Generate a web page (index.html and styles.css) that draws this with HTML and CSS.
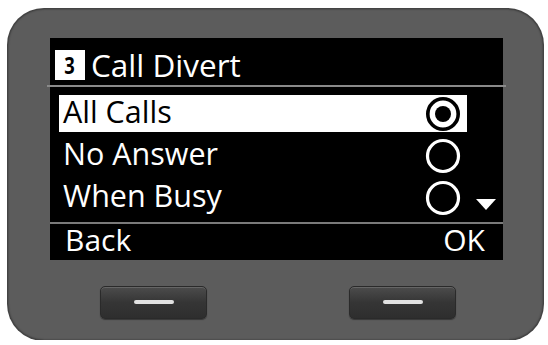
FILE: index.html
```html
<!DOCTYPE html>
<html>
<head>
<meta charset="utf-8">
<link rel="stylesheet" href="styles.css">
</head>
<body>
<div class="phone">
  <div class="screen">
    <div class="title-row">
      <span class="num"><span class="digit">3</span></span>
      <span class="title">Call Divert</span>
    </div>
    <div class="sep"></div>
    <div class="list">
      <div class="row">
        <div class="item selected">
          <span class="label">All Calls</span>
          <svg class="radio" width="36" height="36" viewBox="0 0 36 36"><circle cx="18" cy="18" r="15.2" fill="none" stroke="#000" stroke-width="3.6"/><circle cx="18" cy="18" r="8" fill="#000"/></svg>
        </div>
        <div class="aside"></div>
      </div>
      <div class="row">
        <div class="item">
          <span class="label">No Answer</span>
          <svg class="radio" width="36" height="36" viewBox="0 0 36 36"><circle cx="18" cy="18" r="15.5" fill="none" stroke="#fff" stroke-width="3.2"/></svg>
        </div>
        <div class="aside"></div>
      </div>
      <div class="row">
        <div class="item">
          <span class="label">When Busy</span>
          <svg class="radio" width="36" height="36" viewBox="0 0 36 36"><circle cx="18" cy="18" r="15.5" fill="none" stroke="#fff" stroke-width="3.2"/></svg>
        </div>
        <div class="aside"><span class="down"></span></div>
      </div>
    </div>
    <div class="sep2"></div>
    <div class="softkeys">
      <span class="sk">Back</span>
      <span class="sk">OK</span>
    </div>
  </div>
  <div class="buttons">
    <div class="btn"><span class="bar"></span></div>
    <div class="btn"><span class="bar"></span></div>
  </div>
</div>
</body>
</html>
```

FILE: styles.css
```css
html, body {
  margin: 0;
  padding: 0;
  background: #fff;
}
body {
  font-family: "Open Sans", "Noto Sans", sans-serif;
}
.phone {
  margin: 9px 0 0 8px;
  width: 535px;
  height: 331px;
  box-sizing: border-box;
  padding: 29px 0 0 42px;
  border-radius: 36px;
  background: #5c5c5c;
  box-shadow: 0 0 0 1px #444, inset 0 0 2px rgba(0,0,0,0.5);
}
.screen {
  width: 453px;
  height: 222px;
  background: #000;
  display: flex;
  flex-direction: column;
}
.title-row {
  height: 47px;
  box-sizing: border-box;
  padding: 12px 0 0 5px;
  display: flex;
  align-items: flex-start;
  gap: 6px;
}
.num {
  width: 30px;
  height: 30px;
  background: #fff;
  color: #000;
  display: flex;
  align-items: center;
  justify-content: center;
}
.digit {
  display: inline-block;
  font-weight: 700;
  font-size: 23px;
  line-height: 30px;
  transform: scaleX(0.8);
}
.title {
  color: #fff;
  font-size: 31.5px;
  line-height: 30px;
}
.sep {
  height: 2px;
  margin: 0 -3px;
  background: #8a8a8a;
}
.list {
  padding-top: 8px;
  display: flex;
  flex-direction: column;
  gap: 5px;
}
.row {
  height: 37px;
  display: flex;
}
.item {
  width: 408px;
  margin-left: 9px;
  box-sizing: border-box;
  padding: 0 6px 0 4px;
  display: flex;
  align-items: center;
  justify-content: space-between;
  color: #fff;
}
.item.selected {
  background: #fff;
  color: #000;
}
.label {
  font-size: 30.5px;
  line-height: 32px;
  align-self: flex-start;
}
.radio {
  display: block;
}
.aside {
  flex: 1;
  display: flex;
  align-items: flex-end;
  padding: 0 0 6px 9px;
}
.down {
  width: 0;
  height: 0;
  border-left: 10.5px solid transparent;
  border-right: 10.5px solid transparent;
  border-top: 11px solid #fff;
}
.sep2 {
  margin-top: 6px;
  height: 2px;
  background: #7a7a7a;
}
.softkeys {
  flex: 1;
  display: flex;
  justify-content: space-between;
  padding: 0 18px 0 15px;
}
.sk {
  color: #fff;
  font-size: 30px;
  line-height: 32px;
}
.buttons {
  display: flex;
  gap: 142px;
  padding: 26px 0 0 50px;
}
.btn {
  width: 107px;
  height: 33px;
  box-sizing: border-box;
  border-radius: 5px;
  background: linear-gradient(#4c4c4c, #353535 50%, #2e2e2e);
  border: 1px solid #2a2a2a;
  box-shadow: inset 0 1px 0 rgba(255,255,255,0.15), 0 1px 1px rgba(0,0,0,0.4);
  display: flex;
  align-items: center;
  justify-content: center;
}
.bar {
  width: 40px;
  height: 4px;
  border-radius: 2px;
  background: #e2e2e2;
  margin-top: -2px;
}
```
